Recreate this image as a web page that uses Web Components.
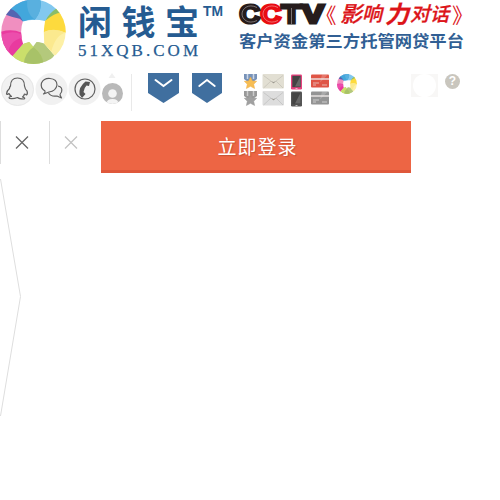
<!DOCTYPE html>
<html lang="zh-CN">
<head>
<meta charset="utf-8">
<title>闲钱宝</title>
<style>
html,body{margin:0;background:#fff}
body{width:500px;height:500px;overflow:hidden;font-family:"Liberation Sans","Noto Sans CJK SC",sans-serif}
</style>
</head>
<body>
<sprite-page></sprite-page>
<script>
function define(name, css, html) {
  customElements.define(name, class extends HTMLElement {
    constructor() {
      super();
      this.attachShadow({mode: 'open'}).innerHTML = '<style>:host{display:block;flex:none}svg{display:block;overflow:visible}' + css + '</style>' + html;
    }
  });
}

define('colour-wheel', ':host{width:65px;height:64px}svg{width:100%;height:100%}', `
<svg viewBox="4 0 194 191" preserveAspectRatio="none">
 <defs><clipPath id="disc"><ellipse cx="101" cy="95" rx="96" ry="96"/></clipPath></defs>
 <g clip-path="url(#disc)">
  <path d="M0 0H101L70 62Q58 95 70 131L38 168L0 191Z" fill="#f08fc0"/>
  <path d="M0 96Q35 84 64 97Q64 116 70 131L38 170L0 191Z" fill="#e93a9f"/>
  <path d="M0 106Q36 89 64 102L65 113Q27 125 26 160L0 191Z" fill="#ec4eac"/>
  <path d="M38 168L70 131Q101 117 133 130L163 165L150 191H60Z" fill="#b4c97c"/>
  <path d="M38 168L70 131L90 125L101 140Q128 160 128 191H60Z" fill="#cadf6b"/>
  <path d="M101 140Q128 160 131 191H72Q74 158 101 140Z" fill="#a8c268"/>
  <path d="M172 23L135 62Q128 95 133 130L163 165L198 180V0Z" fill="#fdf0a6"/>
  <path d="M172 23L135 62Q131 78 131 96Q160 82 198 98V0Z" fill="#fdda3d"/>
  <path d="M131 96Q160 80 198 98Q168 102 154 154L133 130Z" fill="#fbe98e"/>
  <path d="M30 25L70 64Q101 54 135 63L174 24L150 0H50Z" fill="#82c8ef"/>
  <path d="M30 25L70 64Q88 57 105 59Q127 30 122 0H50Z" fill="#42a7dc"/>
  <path d="M82 0H122Q127 34 105 59Q79 42 82 0Z" fill="#59b0df"/>
  <path d="M30 25Q55 33 70 64L60 56Q34 50 16 43Z" fill="#5365b1"/>
  <path d="M137 61Q146 41 172 23L183 38Q164 39 137 61Z" fill="#8abd68"/>
 </g>
 <path d="M70 64Q101 69 135 63Q129 95 133 126L110 125L100 139L89 125L69 127Q71 96 70 64Z" fill="#fff"/>
</svg>`);

define('brand-logo', ':host{display:flex;width:232px;height:70px;padding:0 0 0 1px;box-sizing:border-box}.words{width:160px;height:70px}', `
<colour-wheel></colour-wheel>
<svg class="words" viewBox="66 0 160 70" fill="#255b91">
 <text x="78" y="35" font-family="Liberation Sans, Noto Sans CJK SC" font-size="34" font-weight="700" textLength="121" lengthAdjust="spacing">闲钱宝</text>
 <text x="78" y="56" font-family="Liberation Serif" font-size="17" stroke="#255b91" stroke-width=".25" textLength="120" lengthAdjust="spacing">51XQB.COM</text>
 <text x="203" y="16" font-family="Liberation Sans" font-size="14" font-weight="700" textLength="20" lengthAdjust="spacingAndGlyphs">TM</text>
</svg>`);

define('media-banner', ':host{width:240px;height:70px}', `
<svg width="240" height="70" viewBox="233 0 240 70">
 <g font-family="Liberation Sans" font-weight="700" font-size="25.500" stroke-width="3">
  <text x="239.500" y="22.600" fill="#261c1c" stroke="#261c1c" textLength="20.500" lengthAdjust="spacingAndGlyphs">C</text>
  <text x="260.500" y="22.600" fill="#e80c12" stroke="#e80c12" textLength="20.500" lengthAdjust="spacingAndGlyphs">C</text>
  <text x="281.500" y="22.600" fill="#261c1c" stroke="#261c1c" textLength="20" lengthAdjust="spacingAndGlyphs">T</text>
  <text x="302" y="22.600" fill="#261c1c" stroke="#261c1c" textLength="22" lengthAdjust="spacingAndGlyphs">V</text>
 </g>
 <g fill="none" stroke="#fff" stroke-width=".6" opacity=".65">
  <path d="M257 7.500C248 3 242 9 242 14S248 25 257 20.500"/>
  <path d="M278 7.500C269 3 263 9 263 14S269 25 278 20.500"/>
  <path d="M291.500 8V24"/>
 </g>
 <g fill="#dc1419" font-family="Liberation Sans, Noto Sans CJK SC" font-weight="500">
  <text x="326" y="23" font-size="21" font-weight="400" style="font-feature-settings:'halt'">《</text>
  <g stroke="#dc1419" stroke-width=".3">
   <text transform="translate(340 22) skewX(-14)" font-size="22">影</text>
   <text transform="translate(362 21) skewX(-14)" font-size="20">响</text>
   <text transform="translate(385 22.500) skewX(-14)" font-size="24" font-weight="700">力</text>
   <text transform="translate(410 21) skewX(-14)" font-size="20">对</text>
   <text transform="translate(430 21) skewX(-14)" font-size="19">话</text>
  </g>
  <text x="452" y="23" font-size="21" font-weight="400" style="font-feature-settings:'halt'">》</text>
 </g>
 <text x="239" y="47" fill="#315f94" font-family="Liberation Sans, Noto Sans CJK SC" font-weight="700" font-size="16" textLength="225" lengthAdjust="spacingAndGlyphs">客户资金第三方托管网贷平台</text>
</svg>`);

define('contact-icons', ':host{width:132px;height:42px}', `
<svg width="132" height="42" viewBox="0 71 132 42">
 <g fill="#f1f1f1"><circle cx="17.5" cy="89.5" r="16.5"/><circle cx="51.5" cy="89" r="16"/><circle cx="84.5" cy="89" r="16"/></g>
 <circle cx="17.5" cy="89.5" r="16" fill="none" stroke="#e8e8e8"/>
 <g fill="none" stroke="#606060" stroke-width="1.2" stroke-linejoin="round">
  <path d="M10.5 86Q10.500 78 17.500 78T24.500 86Q25 89 27 91Q28 94 26.500 95Q25 94 24.500 94Q24 96 22.500 97Q26 98 24 99Q19 99 17.500 97.500Q14 99 9.500 98.500Q8 97 11.500 96.500Q9.500 95 9 93.500Q7 95 6.500 94Q6.500 91 9.500 88.500Q9.500 87 10.500 86Z"/>
  <path d="M45 91Q40 88 41.500 83Q44 78 50 78.500Q57 79 57 85Q56 91 49 92L43.500 94Q45.500 92.500 45 91Z"/>
  <path d="M58 86Q63 87 61.500 92Q60 94 60 95L61.500 98L57 96Q51 97 48.500 93"/>
  <circle cx="85" cy="89" r="10"/>
 </g>
 <path d="M85.500 81.500L90 82L89 86L86.500 85.500Q84 88 83.500 92L85.500 94L82 98L79.500 94.500Q78.500 87 85.500 81.500Z" fill="#555"/>
 <path d="M108.500 78L112 73L115.500 78Z" fill="#f0f0f0"/>
 <clipPath id="avatar"><circle cx="112.500" cy="93.500" r="10.500"/></clipPath>
 <circle cx="112.500" cy="93.500" r="10.500" fill="#b9b9b9"/>
 <g clip-path="url(#avatar)" fill="#f4f4f4"><circle cx="112.500" cy="93.500" r="4.300"/><path d="M106.500 105Q106 99 112.500 99T118.500 105Z"/></g>
 <path d="M131.500 74V111" stroke="#e9e9e9"/>
</svg>`);

define('arrow-flag', ':host{width:31px;height:30px}:host([up]){width:30px}:host([up]) .down,.up{display:none}:host([up]) .up{display:inline}svg{width:100%}', `
<svg width="31" height="30" viewBox="0 0 31 30" preserveAspectRatio="none"><path d="M0 0H31V20L15.500 30L0 20Z" fill="#406f9f"/>
<g fill="none" stroke="#fff" stroke-width="2" stroke-linecap="round"><path class="down" d="M7.500 7L15.500 13L23.500 7"/><path class="up" d="M7.500 13L15.500 7L23.500 13"/></g></svg>`);

define('status-icons', ':host{width:90px;height:36px}', `
<svg width="90" height="36" viewBox="244 73 90 36">
 <defs>
  <g id="medal"><path d="M0 0H13V5L9 8H4L0 5Z" fill="var(--ribbon)"/><path d="M3.500 0V5M9.500 0V5" stroke="var(--stripe)" stroke-width="1.500"/><path d="M6.500 3L8.400 7L12.700 7.300L9.700 10.200L10.600 14.500L6.500 12.300L2.400 14.500L3.300 10.200L.3 7.300L4.600 7Z" fill="var(--main)" stroke="var(--edge)" stroke-width=".5"/></g>
  <g id="mail"><rect width="21.500" height="14.500" rx="1" fill="var(--main)"/><path d="M1 1.500L11 9L20.500 1.500M1 14L8.500 7M20.500 14L13.500 7" fill="none" stroke="var(--edge)" stroke-width=".6"/><path d="M8.500 7.200L11 9.200L13.500 7.200L11 8Z" fill="#9b988f"/></g>
  <g id="phone"><rect width="11" height="15" rx="1.300" fill="var(--main)"/><rect x="1.300" y="1.300" width="8.400" height="11.400" fill="#444"/><path d="M9.500 1.500V12L4 12Z" fill="#686868"/><path d="M4.500 14H6.500" stroke="#ddd" stroke-width=".8"/></g>
  <g id="card"><rect width="18" height="13" rx="1" fill="var(--main)"/><path d="M11 0H17L9 8Z" fill="#fff" opacity=".2"/><path d="M0 4.500H18" stroke="#ece7e5" stroke-width="1.400"/><path d="M2 8.500H8M2 10.500H5M11 10.500H16" stroke="#eee" stroke-width=".8" opacity=".8"/></g>
 </defs>
 <g style="--ribbon:#7893b9;--stripe:#ccd7e7;--main:#f6bd54;--edge:#f0ac42"><use href="#medal" x="244" y="74"/></g>
 <g style="--ribbon:#999;--stripe:#ccc;--main:#a0a0a0;--edge:#999"><use href="#medal" x="244" y="91"/></g>
 <g style="--main:#e2dfd3;--edge:#bebbb0"><use href="#mail" x="262.500" y="74"/></g>
 <g style="--main:#ddd;--edge:#b9b9b9"><use href="#mail" x="262.500" y="91"/></g>
 <g style="--main:#e8427f"><use href="#phone" x="291" y="74.500"/></g>
 <g style="--main:#555"><use href="#phone" x="291" y="91.500"/></g>
 <g style="--main:#df5546"><use href="#card" x="311" y="74.500"/></g>
 <g style="--main:#949494"><use href="#card" x="311" y="91.500"/></g>
</svg>`);

define('help-badge', ':host{width:15px;height:15px;border-radius:50%;background:#c9c6be;color:#fff;font:700 12px/15px "Liberation Sans",sans-serif;text-align:center}', '?');
define('round-mask', ':host{width:27px;height:23px;background:#f8f7f6}i{display:block;width:23px;height:23px;margin:auto;border-radius:50%;background:#fff}', '<i></i>');
define('close-tab', ':host{width:49px;height:43px;border-left:1px solid #ddd;box-sizing:border-box;color:#666}:host([muted]){color:#c3c3c3}svg{margin:15px 0 0 14px}', '<svg width="14" height="13" viewBox="0 0 14 13"><path d="M1 .5L13 12.500M13 .5L1 12.500" stroke="currentColor" stroke-width="1.300"/></svg>');
define('login-button', ':host{width:310px;height:52px;box-sizing:border-box;border-bottom:3px solid #df583b;background:#ed6544;color:#fff;text-align:center;font:400 19px/49px "Noto Sans CJK SC",sans-serif;letter-spacing:1px;text-shadow:1px 1px 1px #a43d2580;padding-left:3px}', '<slot></slot>');
define('side-pointer', ':host{width:22px;height:238px}', '<svg width="22" height="238" viewBox="0 0 22 238"><path d="M.5 0L20.500 117.500L.5 237" fill="none" stroke="#dedede"/></svg>');

define('sprite-page', `:host{width:500px;height:500px}
.row{display:flex;align-items:flex-start}.head{height:71px}.icons{height:50px}
.flags{display:flex;gap:13px;padding:2px 0 0 16px}.status{padding:2px 0 0 22px}
.mini{width:20px;height:20px;margin:3px 0 0 3px}.mask{margin:3px 0 0 54px}.help{margin:3px 0 0 7px}
.actions{height:58px}.login{margin-left:3px}`, `
<div class="row head"><brand-logo></brand-logo><media-banner style="margin-left:1px"></media-banner></div>
<div class="row icons"><contact-icons></contact-icons><div class="flags"><arrow-flag></arrow-flag><arrow-flag up></arrow-flag></div><div class="status"><status-icons></status-icons></div><colour-wheel class="mini"></colour-wheel><round-mask class="mask"></round-mask><help-badge class="help"></help-badge></div>
<div class="row actions"><close-tab></close-tab><close-tab muted></close-tab><login-button class="login">立即登录</login-button></div>
<side-pointer></side-pointer>`);
</script>
</body>
</html>
